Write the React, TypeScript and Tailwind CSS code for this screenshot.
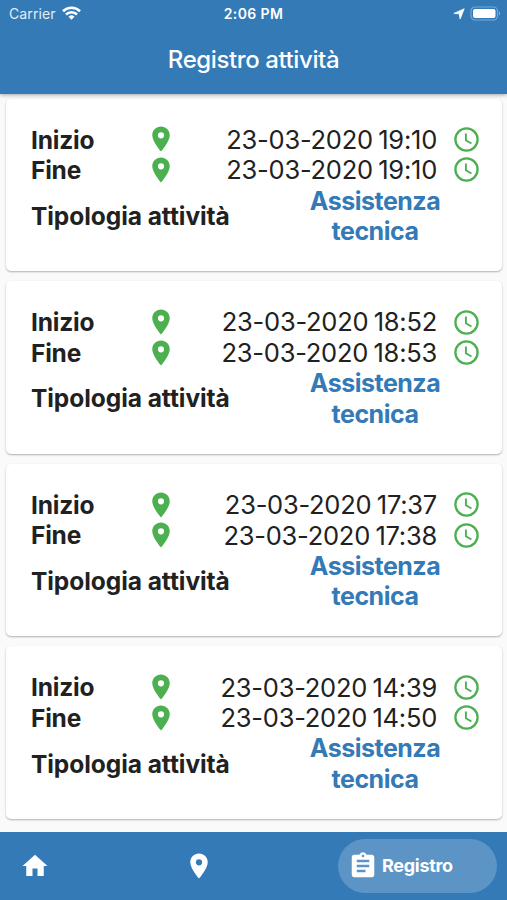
import { MdAssignment, MdHome, MdPlace } from "react-icons/md";

interface Activity {
  id: number;
  start: string;
  end: string;
  type: string;
}

const activities: Activity[] = [
  { id: 1, start: "23-03-2020 19:10", end: "23-03-2020 19:10", type: "Assistenza tecnica" },
  { id: 2, start: "23-03-2020 18:52", end: "23-03-2020 18:53", type: "Assistenza tecnica" },
  { id: 3, start: "23-03-2020 17:37", end: "23-03-2020 17:38", type: "Assistenza tecnica" },
  { id: 4, start: "23-03-2020 14:39", end: "23-03-2020 14:50", type: "Assistenza tecnica" },
];

function StatusBar() {
  return (
    <div className="grid h-[27px] grid-cols-3 items-center pl-[9px] pr-[6px] text-[14px]">
      <div className="flex items-center gap-[6px]">
        <span className="tracking-[0.1px] text-[#e3edf6]">Carrier</span>
        <svg className="-mt-px h-[14px] w-[19px]" viewBox="0 0 19 14" fill="none" stroke="white">
          <path d="M1 5.2a12.2 12.2 0 0 1 17 0" strokeWidth="2.7" />
          <path d="M4 8.5a7.9 7.9 0 0 1 11 0" strokeWidth="2.5" />
          <path d="M9.5 13.8 6.5 10.8a4.3 4.3 0 0 1 6 0z" fill="white" stroke="none" />
        </svg>
      </div>
      <span className="-ml-[3px] whitespace-nowrap text-center text-[14px] font-semibold tracking-[0.4px]">
        2:06 PM
      </span>
      <div className="flex items-center justify-end gap-[5px]">
        <svg className="h-[12px] w-[12px]" viewBox="0 0 12 12" fill="white" stroke="white">
          <path d="M11.2.8 7.1 11 6.2 5.8.9 5.4z" strokeWidth="0.8" strokeLinejoin="round" />
        </svg>
        <svg className="-mt-px h-[15px] w-[31px]" viewBox="0 0 31 15">
          <rect x="1" y="1" width="26.5" height="13" rx="4" fill="none" stroke="#7aa7cf" strokeWidth="1.2" />
          <rect x="3" y="3" width="22.5" height="9" rx="2" fill="white" />
          <path d="M28.8 5.2q1.5.8 1.5 2.3t-1.5 2.3z" fill="#7aa7cf" />
        </svg>
      </div>
    </div>
  );
}

function ClockIcon() {
  return (
    <svg
      className="ml-[14px] size-[30px] shrink-0 text-[#4caf50]"
      viewBox="0 0 30 30"
      fill="none"
      stroke="currentColor"
    >
      <circle cx="15.5" cy="14.5" r="11.1" strokeWidth="2.3" />
      <path d="M14.9 8.4v6.8l5.5 3.3" strokeWidth="1.9" />
    </svg>
  );
}

function TimeRow({ label, value }: { label: string; value: string }) {
  return (
    <div className="flex h-[30.5px] items-center">
      <span className="w-[115px] text-[24.5px] font-bold tracking-[-0.2px]">{label}</span>
      <MdPlace className="-mt-px size-[30px] shrink-0 text-[#4caf50]" />
      <span className="flex-1 whitespace-nowrap text-right text-[25.5px] tracking-[-0.25px] [word-spacing:-1.5px]">
        {value}
      </span>
      <ClockIcon />
    </div>
  );
}

function ActivityCard({ activity }: { activity: Activity }) {
  return (
    <article className="h-[172.6px] shrink-0 rounded-[5px] bg-white pl-[25px] pr-[21px] pt-[26px] shadow-[0_1px_2px_rgba(0,0,0,0.3)]">
      <TimeRow label="Inizio" value={activity.start} />
      <TimeRow label="Fine" value={activity.end} />
      <div className="flex items-center justify-between font-bold">
        <span className="whitespace-nowrap text-[24.5px] tracking-[-0.06px]">Tipologia attività</span>
        <span className="mr-[26px] w-[160px] text-center text-[25px] leading-[30.5px] tracking-[-0.5px] text-[#337ab7]">
          {activity.type}
        </span>
      </div>
    </article>
  );
}

export default function App() {
  return (
    <div className="flex h-[900px] w-[507px] flex-col overflow-hidden bg-[#fafafa] font-['Inter',sans-serif] text-[#212121]">
      <header className="z-10 h-[94px] shrink-0 bg-[#337ab7] text-white shadow-[0_1px_4px_rgba(0,0,0,0.35)]">
        <StatusBar />
        <h1 className="pt-[15px] text-center text-[24px] font-medium leading-9 tracking-[-0.4px]">
          Registro attività
        </h1>
      </header>

      <main className="flex min-h-0 flex-1 flex-col gap-[10px] overflow-hidden pl-[6px] pr-[5px] pt-[4.7px]">
        {activities.map((activity) => (
          <ActivityCard key={activity.id} activity={activity} />
        ))}
      </main>

      <nav className="flex h-[68px] shrink-0 items-center bg-[#337ab7] pl-5 pr-[10px] text-white">
        <button type="button" aria-label="Home">
          <MdHome className="size-[30px]" />
        </button>
        <button type="button" aria-label="Posizione" className="ml-[134px]">
          <MdPlace className="size-[30px]" />
        </button>
        <button
          type="button"
          className="ml-auto flex h-[54px] w-[159px] items-center gap-1 rounded-full bg-[#5c95c5] pl-[10px]"
        >
          <MdAssignment className="-mt-px size-[30px]" />
          <span className="-mt-px text-[18px] font-bold tracking-[-0.3px]">Registro</span>
        </button>
      </nav>
    </div>
  );
}
